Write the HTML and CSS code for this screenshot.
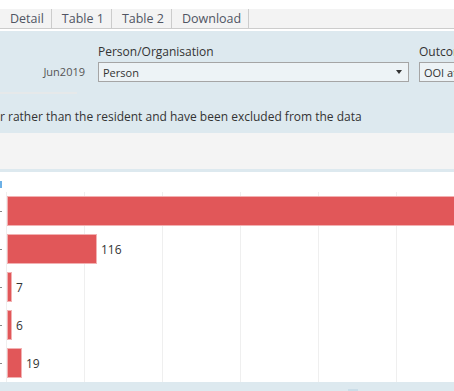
FILE: index.html
```html
<!DOCTYPE html>
<html lang="en">
<head>
    <meta charset="UTF-8">
    <meta name="viewport" content="width=device-width, initial-scale=1.0">
    <title>Dashboard</title>
    <link rel="stylesheet" href="styles.css">
</head>
<body>
    <div class="tabs">
        <span class="tab">Detail</span>
        <span class="tab">Table 1</span>
        <span class="tab">Table 2</span>
        <span class="tab">Download</span>
    </div>

    <div class="panel">
        <div class="filters">
            <div class="period">
                <div class="period-value">Jun2019</div>
                <div class="period-rule"></div>
            </div>
            <div class="filter filter-person">
                <div class="filter-label">Person/Organisation</div>
                <div class="dropdown">
                    <span>Person</span>
                    <span class="arrow"></span>
                </div>
            </div>
            <div class="filter filter-outcome">
                <div class="filter-label">Outcome</div>
                <div class="dropdown">
                    <span>OOI at</span>
                </div>
            </div>
        </div>
        <p class="note">r rather than the resident and have been excluded from the data</p>
    </div>

    <div class="toolbar"></div>

    <div class="chart">
        <div class="chart-head"><span class="legend-mark"></span></div>
        <div class="plot">
            <div class="row"><span class="tick"></span><span class="bar" style="width: 470px;"></span></div>
            <div class="row"><span class="tick"></span><span class="bar" style="width: 90px;"></span><span class="value">116</span></div>
            <div class="row"><span class="tick"></span><span class="bar" style="width: 5px;"></span><span class="value">7</span></div>
            <div class="row"><span class="tick"></span><span class="bar" style="width: 5px;"></span><span class="value">6</span></div>
            <div class="row"><span class="tick"></span><span class="bar" style="width: 15px;"></span><span class="value">19</span></div>
        </div>
    </div>

    <div class="footer"><span class="scroll-thumb"></span></div>
</body>
</html>
```

FILE: styles.css
```css
body {
    font-family: "Open Sans", "Liberation Sans", sans-serif;
    margin: 0;
    padding: 0;
    width: 454px;
    height: 391px;
    overflow: hidden;
    background-color: white;
    color: #333;
}
.tabs {
    display: flex;
    margin-top: 9px;
    height: 19px;
    background-color: #f3f3f3;
    border-bottom: 1px solid #cccccc;
    white-space: nowrap;
}
.tab {
    padding: 0 7px 0 10px;
    font-size: 12.5px;
    line-height: 19px;
    color: #505563;
    border-right: 1px solid #cccccc;
}
.panel {
    margin-top: 2px;
    height: 102px;
    box-sizing: border-box;
    padding-top: 13px;
    background-color: #dde9ef;
    overflow: hidden;
}
.filters {
    display: flex;
    white-space: nowrap;
}
.period {
    width: 85px;
    flex-shrink: 0;
    padding-top: 18px;
}
.period-value {
    text-align: right;
    font-size: 11px;
    line-height: 20px;
    color: #555;
}
.period-rule {
    width: 77px;
    height: 2px;
    margin-top: 10px;
    background-color: #e6e9ea;
}
.filter {
    flex-shrink: 0;
    margin-left: 13px;
}
.filter-outcome {
    margin-left: 10px;
    width: 200px;
}
.filter-label {
    font-size: 12px;
    line-height: 16px;
    margin-bottom: 2px;
    color: #333;
}
.dropdown {
    display: flex;
    align-items: center;
    justify-content: space-between;
    height: 20px;
    box-sizing: border-box;
    padding: 0 6px 0 4px;
    border: 1px solid #a5a5a5;
    background-color: #edf3f6;
    font-size: 11px;
    color: #333;
}
.filter-person .dropdown {
    width: 311px;
}
.arrow {
    width: 0;
    height: 0;
    border-left: 3px solid transparent;
    border-right: 3px solid transparent;
    border-top: 4px solid #333;
}
.note {
    margin: 15px 0 0;
    font-size: 12px;
    line-height: 16px;
    white-space: nowrap;
    color: #333;
}
.toolbar {
    height: 36px;
    background-color: #f4f4f4;
}
.chart {
    border-top: 3px solid #dde9ef;
    background-color: white;
}
.chart-head {
    height: 20px;
    box-sizing: border-box;
    padding-top: 9px;
}
.legend-mark {
    display: block;
    width: 2px;
    height: 7px;
    background-color: #6cb0e6;
}
.plot {
    display: flex;
    flex-direction: column;
    gap: 8px;
    padding: 4px 0;
    background-image: linear-gradient(90deg, #efefef 0, #efefef 1px, transparent 1px);
    background-size: 78px 100%;
    background-position: 6px 0;
    background-repeat: repeat-x;
    overflow: hidden;
}
.row {
    display: flex;
    align-items: center;
    height: 30px;
    white-space: nowrap;
}
.tick {
    width: 2px;
    height: 1px;
    margin-right: 5px;
    flex-shrink: 0;
    background-color: #888;
}
.bar {
    height: 30px;
    box-sizing: border-box;
    flex-shrink: 0;
    border: 1px solid #f2b1b2;
    background-color: #e15759;
}
.value {
    margin-left: 4px;
    font-size: 12px;
    color: #333;
}
.footer {
    height: 9px;
    background-color: #dde9ef;
    position: relative;
}
.scroll-thumb {
    position: absolute;
    left: 348px;
    bottom: 0;
    width: 10px;
    height: 2px;
    background-color: #cadde8;
}
```
